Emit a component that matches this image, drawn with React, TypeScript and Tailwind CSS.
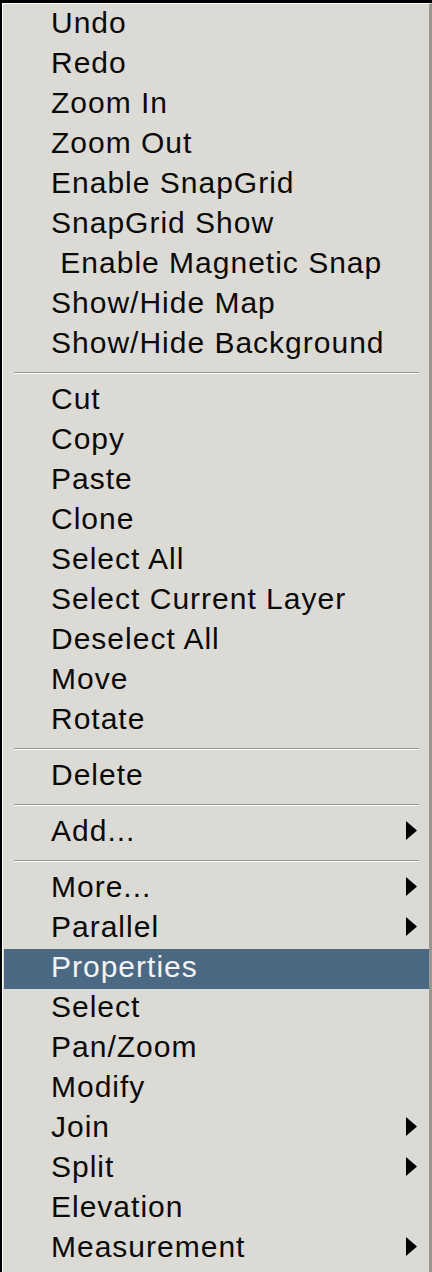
const items: (string | null)[] = [
  "Undo",
  "Redo",
  "Zoom In",
  "Zoom Out",
  "Enable SnapGrid",
  "SnapGrid Show",
  " Enable Magnetic Snap",
  "Show/Hide Map",
  "Show/Hide Background",
  null,
  "Cut",
  "Copy",
  "Paste",
  "Clone",
  "Select All",
  "Select Current Layer",
  "Deselect All",
  "Move",
  "Rotate",
  null,
  "Delete",
  null,
  "Add...",
  null,
  "More...",
  "Parallel",
  "Properties",
  "Select",
  "Pan/Zoom",
  "Modify",
  "Join",
  "Split",
  "Elevation",
  "Measurement",
];

const submenus = ["Add...", "More...", "Parallel", "Join", "Split", "Measurement"];
const active = "Properties";

const Arrow = ({ light }: { light?: boolean }) => (
  <svg width="11" height="19" viewBox="0 0 11 19" className="mr-[12px] mb-[5px] shrink-0">
    <polygon points="0,0 11,9.5 0,19" fill={light ? "#ffffff" : "#000000"} />
  </svg>
);

export default function App() {
  return (
    <div className="w-[432px] h-[1272px] overflow-hidden bg-black pl-[2px] pt-[3px]">
      <div className="h-full bg-[#dcdad5] border-l border-t border-white border-r-[3px] border-r-[#9a9690] pt-px pl-px font-['Liberation_Sans',Arial,sans-serif]">
        {items.map((item, i) =>
          item === null ? (
            <div key={i} className="h-4 pt-[7px] px-[10px]">
              <div className="h-px bg-[#9a9690]" />
              <div className="h-px bg-white" />
            </div>
          ) : (
            <div
              key={i}
              className={
                "h-10 flex items-center justify-between pl-[47px] " +
                (item === active ? "bg-[#4b6983] text-[#f4f4f4]" : "text-[#0a0a0a]")
              }
            >
              <span className="text-[30px] leading-[35px] tracking-[1px] whitespace-pre mb-[5px]">{item}</span>
              {submenus.includes(item) && <Arrow light={item === active} />}
            </div>
          )
        )}
      </div>
    </div>
  );
}
